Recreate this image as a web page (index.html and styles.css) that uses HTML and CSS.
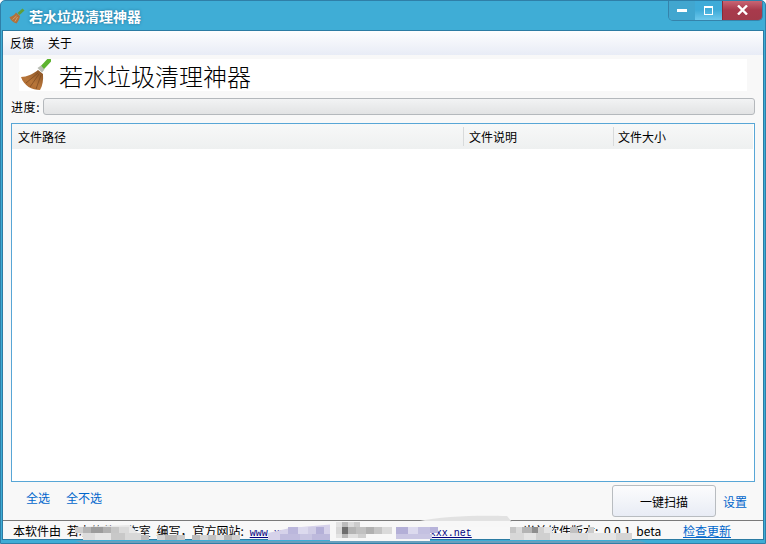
FILE: index.html
```html
<!DOCTYPE html>
<html lang="zh-CN">
<head>
  <meta charset="UTF-8">
  <title>若水垃圾清理神器</title>
  <link rel="stylesheet" href="styles.css">
</head>
<body>
<div class="window">
  <div class="titlebar">
    <svg class="title-icon" viewBox="0 0 16 16" width="16" height="16">
      <path d="M9.5 6 L14.5 1.5" stroke="#5f9e3a" stroke-width="3"/>
      <path d="M7 4.5 L11 8 C10.5 11 9 14 7.5 15.5 C4 14.5 1.5 12 0.5 9 C3 8.5 5.5 7 7 4.5 Z" fill="#b0713c"/>
      <path d="M7.5 8 L3.5 11.5 M8.5 9 L6 13.5" stroke="#e0b080" stroke-width="0.7"/>
    </svg>
    <div class="title-text">若水垃圾清理神器</div>
    <div class="win-buttons">
      <div class="win-btn btn-min"><span class="min-glyph"></span></div>
      <div class="win-btn btn-max"><span class="max-glyph"></span></div>
      <div class="win-btn btn-close">
        <svg viewBox="0 0 11 10" width="11" height="10"><path d="M1 0.5 L10 9.5 M10 0.5 L1 9.5" stroke="#fff" stroke-width="2.4"/></svg>
      </div>
    </div>
  </div>
  <div class="client">
    <div class="menubar">
      <span class="menu-item">反馈</span>
      <span class="menu-item">关于</span>
    </div>
    <div class="banner">
      <svg class="logo" viewBox="0 0 32 32" width="32" height="32">
        <defs>
          <linearGradient id="fan" x1="0.9" y1="0" x2="0.2" y2="1">
            <stop offset="0" stop-color="#8a5426"/>
            <stop offset="0.6" stop-color="#b8763a"/>
            <stop offset="1" stop-color="#a9652c"/>
          </linearGradient>
        </defs>
        <path d="M23 9 L30 1.5" stroke="#5db32f" stroke-width="4.5" stroke-linecap="round"/>
        <path d="M18.5 9 L22 6.5 L25.5 10.5 L23 13.5 Z" fill="#b9bdb4"/>
        <path d="M2 18 C8 18 14 15 19 11 L24 15 C24.5 21 23.5 27 21 31 C13 31 5 27 2 18 Z" fill="url(#fan)"/>
        <path d="M19 14 L7 24 M20 15 L11 28 M22 16 L17 30" stroke="#7a4820" stroke-width="0.7" fill="none"/>
      </svg>
      <div class="banner-title">若水垃圾清理神器</div>
    </div>
    <div class="progress-row">
      <span class="progress-label">进度:</span>
      <div class="progress-bar"></div>
    </div>
    <div class="list">
      <div class="list-head">
        <div class="col col-path">文件路径</div>
        <div class="col col-desc">文件说明</div>
        <div class="col col-size">文件大小</div>
      </div>
    </div>
    <div class="actions">
      <div class="select-links">
        <a class="link">全选</a>
        <a class="link">全不选</a>
      </div>
      <div class="scan-group">
        <button class="scan-btn">一键扫描</button>
        <a class="link">设置</a>
      </div>
    </div>
    <div class="statusbar">
      <span class="status-text">本软件由 若水软件工作室 编写，官方网站:<span class="site">www.xxxxxxxxxxxxxxxxxxxxxxxxxxxxx.net</span></span>
      <span class="status-ver">当前软件版本: 0.0.1 beta</span>
      <a class="update-link">检查更新</a>
    </div>
  </div>
  <!-- 打码 -->
  <svg class="mosaic" viewBox="0 510 766 34" width="766" height="34">
    <path d="M75 541 L640 541 L650 544 L85 544 Z" fill="#6a9fbd"/>
    <path d="M420 521 C440 516 480 515 507 516 L512 522 Z" fill="#e2e2e2"/>
    <path d="M75 527 L130 525 L145 540 L85 540 Z" fill="#e8e8e8"/>
    <rect x="75" y="527" width="8" height="6" fill="#cfcfcf"/>
    <rect x="83" y="527" width="8" height="6" fill="#b4b4b4"/>
    <rect x="91" y="527" width="12" height="6" fill="#9c9c9c"/>
    <rect x="103" y="527" width="8" height="6" fill="#b0b0b0"/>
    <rect x="111" y="527" width="8" height="6" fill="#c6c6c6"/>
    <rect x="119" y="527" width="10" height="6" fill="#dadada"/>
    <rect x="83" y="533" width="12" height="7" fill="#dcdcdc"/>
    <rect x="95" y="533" width="16" height="7" fill="#e6e6e6"/>
    <rect x="111" y="533" width="14" height="7" fill="#c8c8c8"/>
    <rect x="125" y="533" width="16" height="7" fill="#d8d8d8"/>
    <rect x="141" y="535" width="8" height="5" fill="#bdbdbd"/>
    <rect x="157" y="535" width="8" height="5" fill="#d4d4d4"/>
    <rect x="165" y="535" width="12" height="5" fill="#b8b8b8"/>
    <rect x="177" y="535" width="8" height="5" fill="#cacaca"/>
    <rect x="192" y="535" width="8" height="5" fill="#bcbcbc"/>
    <rect x="200" y="535" width="8" height="5" fill="#d6d6d6"/>
    <rect x="208" y="535" width="8" height="5" fill="#c2c2c2"/>
    <rect x="216" y="535" width="8" height="5" fill="#dedede"/>
    <rect x="224" y="535" width="8" height="5" fill="#b6b6b6"/>
    <rect x="232" y="535" width="8" height="5" fill="#d0d0d0"/>
    <path d="M268 533 L290 528 L336 524 L336 540 L268 540 Z" fill="#d6d2ea"/>
    <rect x="288" y="527" width="10" height="7" fill="#bbb7dc"/>
    <rect x="298" y="527" width="10" height="7" fill="#dcdaee"/>
    <rect x="308" y="527" width="8" height="7" fill="#d0cde6"/>
    <rect x="316" y="527" width="8" height="7" fill="#b4b0d8"/>
    <rect x="300" y="534" width="12" height="6" fill="#c8c5e2"/>
    <rect x="280" y="534" width="20" height="6" fill="#c0bcde"/>
    <rect x="312" y="534" width="18" height="6" fill="#bdb9dc"/>
    <rect x="330" y="521" width="100" height="20" fill="#f7f7f7"/>
    <rect x="336" y="522" width="6" height="5" fill="#e2e2e2"/>
    <rect x="342" y="522" width="6" height="5" fill="#bcbcbc"/>
    <rect x="348" y="522" width="6" height="5" fill="#dcdcdc"/>
    <rect x="354" y="522" width="6" height="5" fill="#cccccc"/>
    <rect x="336" y="527" width="6" height="7" fill="#d8d8d8"/>
    <rect x="342" y="527" width="6" height="7" fill="#6e6e6e"/>
    <rect x="348" y="527" width="8" height="7" fill="#b4b4b4"/>
    <rect x="356" y="527" width="10" height="7" fill="#c0c0c0"/>
    <rect x="366" y="527" width="8" height="7" fill="#b0b0b0"/>
    <rect x="374" y="527" width="8" height="7" fill="#c4c4c4"/>
    <rect x="382" y="527" width="10" height="7" fill="#dadada"/>
    <rect x="336" y="534" width="6" height="4" fill="#e4e4e4"/>
    <rect x="342" y="534" width="6" height="4" fill="#b8b8b8"/>
    <rect x="348" y="534" width="10" height="4" fill="#e0e0e0"/>
    <rect x="358" y="534" width="8" height="4" fill="#cfcfcf"/>
    <rect x="396" y="527" width="12" height="7" fill="#b3afd7"/>
    <rect x="408" y="527" width="10" height="7" fill="#dcdaee"/>
    <rect x="418" y="527" width="12" height="7" fill="#c4c1e1"/>
    <rect x="430" y="527" width="8" height="6" fill="#b7b3da"/>
    <rect x="396" y="534" width="36" height="5" fill="#c9c6e3"/>
    <rect x="430" y="521" width="80" height="6" fill="#f7f7f7"/>
    <rect x="510" y="527" width="6" height="6" fill="#c6c6c6"/>
    <rect x="516" y="527" width="6" height="6" fill="#dadada"/>
    <rect x="522" y="527" width="10" height="6" fill="#b4b4b4"/>
    <rect x="532" y="527" width="6" height="6" fill="#8e8e8e"/>
    <rect x="538" y="527" width="6" height="6" fill="#d0d0d0"/>
    <rect x="544" y="527" width="8" height="6" fill="#e4e4e4"/>
    <rect x="570" y="527" width="8" height="6" fill="#c0c0c0"/>
    <rect x="588" y="527" width="6" height="6" fill="#cccccc"/>
    <rect x="510" y="533" width="14" height="7" fill="#d8d8d8"/>
    <rect x="524" y="533" width="12" height="7" fill="#e4e4e4"/>
    <rect x="536" y="533" width="14" height="7" fill="#d0d0d0"/>
    <rect x="550" y="533" width="20" height="7" fill="#e6e6e6"/>
    <rect x="570" y="533" width="18" height="7" fill="#dcdcdc"/>
    <rect x="588" y="533" width="28" height="7" fill="#e4e4e4"/>
    <rect x="616" y="533" width="16" height="7" fill="#d4d4d4"/>
  </svg>
</div>
</body>
</html>
```
FILE: styles.css
```css
html, body {
  margin: 0;
  height: 100%;
}
body {
  font-family: "Noto Sans CJK SC", "Liberation Sans", sans-serif;
  font-size: 12px;
  color: #000;
}
.window {
  width: 766px;
  height: 544px;
  box-sizing: border-box;
  display: flex;
  flex-direction: column;
  position: relative;
  overflow: hidden;
  background: #3fadd6;
  border: 1px solid #2f7fa8;
  border-radius: 5px 5px 0 0;
  padding: 0 1px 3px 1px;
}
.titlebar {
  height: 29px;
  flex: none;
  display: flex;
  align-items: center;
  position: relative;
  padding-left: 7px;
}
.title-icon {
  margin-right: 4px;
}
.title-text {
  color: #fff;
  font-size: 14px;
  font-weight: bold;
  text-shadow: 0 0 3px #1f6f95;
}
.win-buttons {
  position: absolute;
  right: 1px;
  top: -1px;
  display: flex;
  height: 20px;
  border: 1px solid #3583ab;
  border-top: none;
  border-radius: 0 0 5px 5px;
  overflow: hidden;
}
.win-btn {
  display: flex;
  align-items: center;
  justify-content: center;
}
.btn-min {
  width: 26px;
  background: #41a6cf;
}
.btn-max {
  width: 27px;
  background: linear-gradient(#3fabd8, #3fabd8 50%, #6cc8ec);
}
.btn-close {
  width: 39px;
  background: linear-gradient(#cc6a78, #a83a4c 50%, #a33a4a);
  border-left: 1px solid #8a2a35;
}
.min-glyph {
  display: block;
  width: 10px;
  height: 3px;
  background: #fff;
  margin-top: 1px;
}
.max-glyph {
  display: block;
  width: 7px;
  height: 6px;
  border: 1px solid #fff;
  border-top-width: 2px;
  box-sizing: content-box;
}
.client {
  flex: 1;
  display: flex;
  flex-direction: column;
  background: #f8f8f8;
  border: 1px solid #2b7ba3;
}
.menubar {
  height: 24px;
  flex: none;
  box-sizing: border-box;
  padding: 0 0 1px 7px;
  display: flex;
  align-items: center;
  gap: 14px;
  background: linear-gradient(#fdfdfe, #e8ecf6);
}
.banner {
  margin: 4px 16px 0 16px;
  height: 32px;
  flex: none;
  display: flex;
  align-items: center;
  gap: 8px;
  background: #fff;
}
.logo {
  flex: none;
}
.banner-title {
  font-weight: 300;
  font-size: 24px;
}
.progress-row {
  display: flex;
  align-items: center;
  margin: 7px 8px 0 8px;
  height: 17px;
  flex: none;
}
.progress-label {
  width: 32px;
  flex: none;
  letter-spacing: 0.6px;
}
.progress-bar {
  flex: 1;
  height: 15px;
  border: 1px solid #b4b8bc;
  border-radius: 3px;
  background: linear-gradient(#f2f3f4, #e2e3e4);
}
.list {
  flex: 1;
  margin: 8px 8px 0 8px;
  background: #fff;
  border: 1px solid #58a6d6;
}
.list-head {
  display: flex;
  height: 25px;
  margin-right: 1px;
  padding-left: 1px;
  background: linear-gradient(#f7f8f8, #eef0f0);
}
.col {
  line-height: 26px;
  padding-left: 5px;
  box-sizing: border-box;
  position: relative;
}
.col-path {
  width: 450px;
}
.col-desc {
  width: 150px;
  padding-left: 6px;
}
.col-size {
  flex: 1;
}
.col-desc::before, .col-size::before {
  content: "";
  position: absolute;
  left: 0;
  top: 3px;
  bottom: 3px;
  width: 1px;
  background: #d8dadb;
}
.actions {
  height: 38px;
  flex: none;
  display: flex;
  justify-content: space-between;
  margin-right: 16px;
}
.select-links {
  display: flex;
  gap: 16px;
  padding: 7px 0 0 23px;
}
.link {
  color: #0066cc;
}
.scan-group {
  display: flex;
  gap: 7px;
  align-items: center;
}
.scan-btn {
  width: 104px;
  height: 32px;
  font: inherit;
  color: #000;
  border: 1px solid #b8bcc0;
  border-radius: 3px;
  background: linear-gradient(#fcfcfd, #e8ecf5);
}
.statusbar {
  height: 19px;
  flex: none;
  box-sizing: border-box;
  border-top: 1px solid #7a7a7a;
  display: flex;
  align-items: center;
  padding: 0 32px 0 10px;
}
.status-text {
  width: 497px;
  flex: none;
  white-space: nowrap;
  word-spacing: 3px;
}
.site {
  font-family: "Liberation Mono", monospace;
  font-size: 10px;
  color: #000080;
  text-decoration: underline;
  margin-left: 6px;
}
.status-ver {
  flex: 1;
  word-spacing: 3px;
  padding-left: 13px;
}
.update-link {
  color: #0066cc;
  text-decoration: underline;
}
.mosaic {
  position: absolute;
  left: -1px;
  bottom: -1px;
}
```
